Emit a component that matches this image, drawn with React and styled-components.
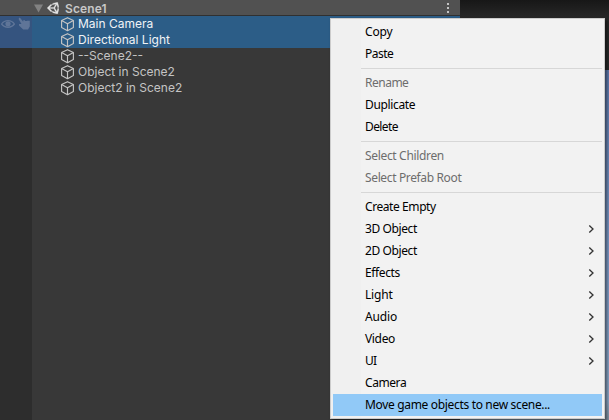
import React from "react";
import styled, { createGlobalStyle } from "styled-components";

const Global = createGlobalStyle`
  body { margin: 0; overflow: hidden; background: #383838; }
  * { box-sizing: border-box; }
`;
const Editor = styled.div`
  position: relative;
  display: grid;
  grid-template-columns: 460px 1fr;
  width: 609px;
  height: 420px;
  overflow: hidden;
`;
const Hierarchy = styled.section`
  display: flex;
  flex-direction: column;
  background: #383838;
  font: 12px/16px Inter, sans-serif;
  color: #c4c4c4;
`;
const SceneHeader = styled.header`
  display: flex;
  align-items: center;
  height: 16px;
  padding: 0 8px 0 34px;
  background: #515151;
  border-bottom: 1px solid #303030;
  font-weight: 600;
  color: #c8c8c8;
`;
const SceneLogo = styled.svg`
  width: 12px;
  height: 12px;
  margin-left: 4px;
  fill: #e4e4e4;
  stroke: #e4e4e4;
  stroke-width: 12;
`;
const SceneName = styled.span`
  flex: 1;
  margin-left: 6px;
  padding-top: 1px;
  line-height: 15px;
  letter-spacing: 0.1px;
`;
const Tree = styled.div`
  flex: 1;
  background: linear-gradient(90deg, #2d2d2d 32px, #383838 32px);
`;
const TreeRow = styled.div`
  display: grid;
  grid-template-columns: 32px 1fr;
  height: 16px;
  background: ${(p) => (p.$selected ? "#2c5d87" : "transparent")};
  color: ${(p) => (p.$selected ? "#f0f3f6" : "#c4c4c4")};
`;
const Gutter = styled.div`
  display: flex;
  align-items: center;
  gap: 3px;
  padding-left: 1px;
  background: ${(p) => (p.$selected ? "#35547f" : "transparent")};
`;
const TreeLabel = styled.div`
  display: flex;
  align-items: center;
  gap: 3px;
  padding-left: 28px;
  white-space: pre;
`;
const GameView = styled.section`
  background: linear-gradient(#171717, #282828 18px, #282828 70px, #5d78ab 70px, #7b98c4 250px, #8aa5c4 400px, #83919e);
`;
const Menu = styled.div`
  position: absolute;
  left: 330px;
  top: 18px;
  width: 275px;
  padding: 2px;
  border: 1px solid #ccc;
  background: linear-gradient(90deg, #f0f0f0 30px, #f2f2f2 30px);
  box-shadow: 2px 2px 3px rgba(0, 0, 0, 0.5);
  font: 12px/22px "Noto Sans", sans-serif;
`;
const MenuItem = styled.div`
  display: flex;
  align-items: center;
  justify-content: space-between;
  height: 22px;
  padding: 0 7px 0 32px;
  background: ${(p) => (p.$active ? "#91c9f7" : "transparent")};
  color: ${(p) => (p.$disabled ? "#6d6d6d" : "#000")};
`;
const MenuText = styled.span`
  letter-spacing: ${(p) => p.$tracking}px;
`;
const Separator = styled.div`
  height: 1px;
  margin: 3px 0 3px 28px;
  background: #d7d7d7;
`;

const Cube = () => (
  <svg width="15" height="16" viewBox="0 0 15 16" fill="none" stroke="#c4c4c4" strokeWidth="1.15" strokeLinejoin="round">
    <path d="M7.5 1.7 13.4 4.6V11.6L7.5 14.7 1.6 11.6V4.6ZM1.6 4.6 7.5 7.8 13.4 4.6M7.5 7.8V14.7" />
  </svg>
);
const UnityLogo = () => (
  <SceneLogo viewBox="10 8 494 494">
    <path d="M498.11 206.4 445.31 14.72 248.2 66.08 219 116.14l-59.2-.43L15.54 256l144.28 140.32 59.17-.43 29.24 50 197.08 51.36 52.8-191.62-30-49.63ZM223.77 124.2 374.55 86.51 288 232.33H114.87Zm0 263.63L114.87 279.71H288l86.55 145.81Zm193 14L330.17 256l86.58-145.84L458.56 256Z" />
  </SceneLogo>
);
const Foldout = () => (
  <svg width="9" height="15" viewBox="0 0 9 15"><path d="M0 4.5H9L4.5 12.5Z" fill="#828282" /></svg>
);
const Kebab = () => (
  <svg width="8" height="15" viewBox="0 0 8 15" fill="#c4c4c4"><path d="M3 3h2v2H3zM3 7h2v2H3zM3 11h2v2H3z" /></svg>
);
const Eye = () => (
  <svg width="14" height="16" viewBox="0 0 14 16">
    <path d="M.6 8C3.7 3.4 10.3 3.4 13.4 8 10.3 12.3 3.7 12.3.6 8Z" fill="none" stroke="#5f7598" strokeWidth="1.3" />
    <circle cx="7" cy="7.8" r="2.6" fill="#5f7598" />
  </svg>
);
const Hand = () => (
  <svg width="12" height="16" viewBox="0 0 12 16" fill="#5f7598">
    <path d="M.8 2.2C1.4 1.5 2.3 2 2.8 2.7L5.2 5.8V4.2H7V5H9V4.8H11.8V10.5L10 13.5H5.2L1 9.6V8H3.5L.8 3.4Z" />
  </svg>
);
const Chevron = () => (
  <svg width="7" height="10" viewBox="0 0 7 10"><path d="M1.3 1.5 5 5 1.3 8.5" fill="none" stroke="#333" strokeWidth="1.3" /></svg>
);

const objects = [
  { name: "Main Camera", selected: true, hovered: true },
  { name: "Directional Light", selected: true },
  { name: "--Scene2--" },
  { name: "Object in Scene2" },
  { name: "Object2 in Scene2" },
];
const groups = [
  [{ text: "Copy", tracking: -0.15 }, { text: "Paste", tracking: -0.5 }],
  [
    { text: "Rename", disabled: true, tracking: -0.5 },
    { text: "Duplicate", tracking: -0.35 },
    { text: "Delete", tracking: -0.6 },
  ],
  [
    { text: "Select Children", disabled: true, tracking: -0.33 },
    { text: "Select Prefab Root", disabled: true, tracking: -0.36 },
  ],
  [
    { text: "Create Empty", tracking: -0.42 },
    { text: "3D Object", sub: true, tracking: -0.4 },
    { text: "2D Object", sub: true, tracking: -0.4 },
    { text: "Effects", sub: true, tracking: -0.38 },
    { text: "Light", sub: true, tracking: -0.2 },
    { text: "Audio", sub: true, tracking: -0.15 },
    { text: "Video", sub: true, tracking: -0.35 },
    { text: "UI", sub: true, tracking: -0.8 },
    { text: "Camera", tracking: -0.42 },
    { text: "Move game objects to new scene...", active: true, tracking: -0.33 },
  ],
];

export default function App() {
  return (
    <>
      <Global />
      <Editor>
        <Hierarchy>
          <SceneHeader>
            <Foldout />
            <UnityLogo />
            <SceneName>Scene1</SceneName>
            <Kebab />
          </SceneHeader>
          <Tree>
            {objects.map((o) => (
              <TreeRow key={o.name} $selected={o.selected}>
                <Gutter $selected={o.selected}>{o.hovered && <><Eye /><Hand /></>}</Gutter>
                <TreeLabel><Cube />{o.name}</TreeLabel>
              </TreeRow>
            ))}
          </Tree>
        </Hierarchy>
        <GameView />
        <Menu>
          {groups.map((items, i) => (
            <React.Fragment key={i}>
              {i > 0 && <Separator />}
              {items.map((m) => (
                <MenuItem key={m.text} $active={m.active} $disabled={m.disabled}>
                  <MenuText $tracking={m.tracking}>{m.text}</MenuText>
                  {m.sub && <Chevron />}
                </MenuItem>
              ))}
            </React.Fragment>
          ))}
        </Menu>
      </Editor>
    </>
  );
}
